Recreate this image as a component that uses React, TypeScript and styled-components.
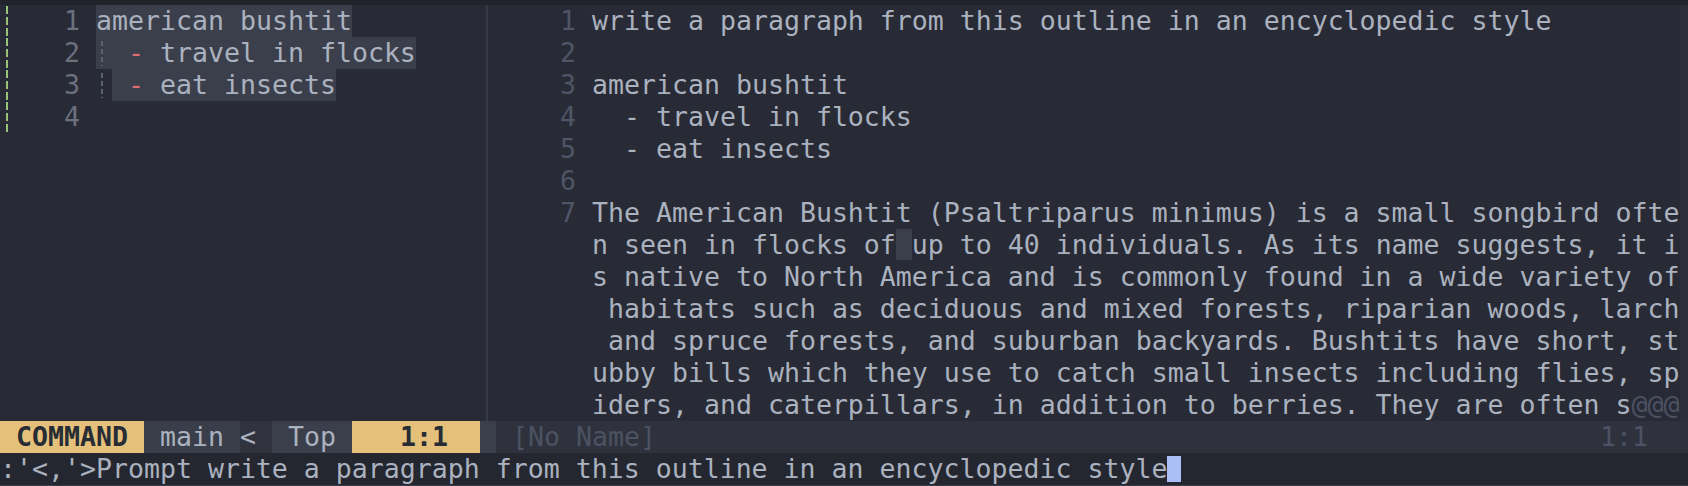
import React from "react";
import styled, { createGlobalStyle, css } from "styled-components";

const CW = 16;
const LH = 32;

const GlobalStyle = createGlobalStyle`
  html, body {
    margin: 0;
    padding: 0;
    background: #282b35;
    overflow: hidden;
  }
`;

const Screen = styled.div`
  width: 1688px;
  height: 486px;
  box-sizing: border-box;
  display: flex;
  flex-direction: column;
  background: #282b35;
  border-top: 5px solid #21242b;
  font-family: "DejaVu Sans Mono", "Liberation Mono", monospace;
  font-size: 26.576px;
  line-height: ${LH}px;
  color: #abb2bf;
  white-space: pre;
`;

const Panes = styled.div`
  display: grid;
  grid-template-columns: ${30 * CW}px ${CW}px ${74 * CW}px 1fr;
  height: ${13 * LH}px;
`;

const Window = styled.div`
  display: flex;
  flex-direction: column;
  overflow: hidden;
`;

const Separator = styled.div`
  display: flex;
  justify-content: center;
  &::before {
    content: "";
    width: 2px;
    margin-right: 2px;
    background: #363a45;
  }
`;

const RightStrip = styled.div`
  background: #2c2f39;
`;

const Row = styled.div`
  display: flex;
  height: ${LH}px;
`;

const Sign = styled.span<{ $added?: boolean }>`
  width: ${2 * CW}px;
  flex: none;
  ${(p) =>
    p.$added &&
    css`
      background: repeating-linear-gradient(
          to bottom,
          #98c379 0 8px,
          transparent 8px 11px
        )
        6px 1px / 2px 100% no-repeat;
    `}
`;

const Num = styled.span<{ $tone: "left" | "right" }>`
  width: ${4 * CW}px;
  flex: none;
  box-sizing: border-box;
  padding-right: ${CW}px;
  text-align: right;
  color: ${(p) => (p.$tone === "left" ? "#6a707d" : "#4f5566")};
`;

const Text = styled.span`
  display: inline-block;
  height: ${LH}px;
`;

const Sel = styled.span`
  display: inline-block;
  height: ${LH}px;
  background: #3b3f4c;
`;

const Guide = styled.span`
  display: inline-block;
  width: ${CW}px;
  height: ${LH}px;
  vertical-align: top;
  background: repeating-linear-gradient(
      to bottom,
      #5c6370 0 5px,
      transparent 5px 8px
    )
    5px 4px / 2px 25px no-repeat;
`;

const Dash = styled.span`
  color: #e06c75;
`;

const Hl = styled.span`
  background: #3b3f4c;
`;

const Dim = styled.span`
  color: #4b5263;
`;

const StatusRow = styled.div`
  display: grid;
  grid-template-columns: ${30 * CW}px ${CW}px 1fr;
  height: ${LH}px;
`;

const StatusLeft = styled.div`
  display: flex;
`;

type SegTone = "mode" | "branch" | "sep" | "pos";

const segBg: Record<SegTone, string> = {
  mode: "#e5c07b",
  branch: "#3a3e4a",
  sep: "#30333d",
  pos: "#3b3f4c",
};

const Seg = styled.span<{ $cols: number; $tone: SegTone }>`
  width: ${(p) => p.$cols * CW}px;
  flex: none;
  background: ${(p) => segBg[p.$tone]};
  color: ${(p) => (p.$tone === "mode" ? "#282c34" : "#abb2bf")};
  font-weight: ${(p) => (p.$tone === "mode" ? 700 : 400)};
`;

const StatusGap = styled.div`
  background: #3b3f4c;
`;

const StatusRight = styled.div`
  display: flex;
  justify-content: space-between;
  background: #2f323c;
  color: #4b5263;
  padding-left: ${CW}px;
  padding-right: ${2 * CW + 8}px;
`;

const CommandLine = styled.div`
  height: ${LH}px;
  display: flex;
  align-items: center;
  background: #24272f;
  border-bottom: 1px solid #383c46;
`;

const Cursor = styled.span`
  display: inline-block;
  width: 14px;
  height: 26px;
  background: #a9bff5;
`;

const leftLines: { num: string; added: boolean; content: React.ReactNode }[] = [
  { num: "1", added: true, content: <Sel>american bushtit</Sel> },
  {
    num: "2",
    added: true,
    content: (
      <Sel>
        <Guide /> <Dash>-</Dash> travel in flocks
      </Sel>
    ),
  },
  {
    num: "3",
    added: true,
    content: (
      <>
        <Guide />
        <Sel>
          {" "}
          <Dash>-</Dash> eat insects
        </Sel>
      </>
    ),
  },
  { num: "4", added: true, content: null },
];

const rightLines: { num: string; content: React.ReactNode }[] = [
  { num: "1", content: "write a paragraph from this outline in an encyclopedic style" },
  { num: "2", content: "" },
  { num: "3", content: "american bushtit" },
  { num: "4", content: "  - travel in flocks" },
  { num: "5", content: "  - eat insects" },
  { num: "6", content: "" },
  { num: "7", content: "The American Bushtit (Psaltriparus minimus) is a small songbird ofte" },
  {
    num: "",
    content: (
      <>
        n seen in flocks of<Hl> </Hl>up to 40 individuals. As its name suggests, it i
      </>
    ),
  },
  { num: "", content: "s native to North America and is commonly found in a wide variety of" },
  { num: "", content: " habitats such as deciduous and mixed forests, riparian woods, larch" },
  { num: "", content: " and spruce forests, and suburban backyards. Bushtits have short, st" },
  { num: "", content: "ubby bills which they use to catch small insects including flies, sp" },
  {
    num: "",
    content: (
      <>
        iders, and caterpillars, in addition to berries. They are often s<Dim>@@@</Dim>
      </>
    ),
  },
];

export default function App() {
  return (
    <>
      <GlobalStyle />
      <Screen>
        <Panes>
          <Window>
            {leftLines.map((l, i) => (
              <Row key={i}>
                <Sign $added={l.added} />
                <Num $tone="left">{l.num}</Num>
                <Text>{l.content}</Text>
              </Row>
            ))}
          </Window>
          <Separator />
          <Window>
            {rightLines.map((l, i) => (
              <Row key={i}>
                <Sign />
                <Num $tone="right">{l.num}</Num>
                <Text>{l.content}</Text>
              </Row>
            ))}
          </Window>
          <RightStrip />
        </Panes>
        <StatusRow>
          <StatusLeft>
            <Seg $cols={9} $tone="mode">{" COMMAND "}</Seg>
            <Seg $cols={6} $tone="branch">{" main "}</Seg>
            <Seg $cols={2} $tone="sep">{"< "}</Seg>
            <Seg $cols={5} $tone="pos">{" Top "}</Seg>
            <Seg $cols={8} $tone="mode">{"   1:1  "}</Seg>
          </StatusLeft>
          <StatusGap />
          <StatusRight>
            <span>[No Name]</span>
            <span>1:1</span>
          </StatusRight>
        </StatusRow>
        <CommandLine>
          <span>:'&lt;,'&gt;Prompt write a paragraph from this outline in an encyclopedic style</span>
          <Cursor />
        </CommandLine>
      </Screen>
    </>
  );
}
